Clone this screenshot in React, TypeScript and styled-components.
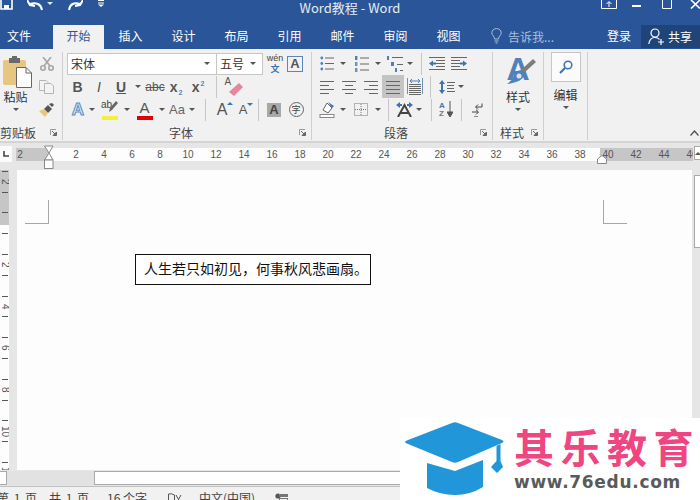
import React from 'react';
import styled, { createGlobalStyle } from 'styled-components';

const BLUE = '#2a5699';
const ICON = '#666666';
const ACCENT = '#4f7fb8';
const CJK = '"Noto Sans CJK SC", "Liberation Sans", sans-serif';

const GlobalStyle = createGlobalStyle`
  html, body { margin: 0; padding: 0; background: #fff; }
  body { font-family: ${CJK}; }
`;

// --- small drawings ---
const Lines = ({ rows, w = 14 }: { rows: [number, number][]; w?: number }) => (
  <svg width={w} height={14} viewBox={`0 0 ${w} 14`}>
    {rows.map(([x1, x2], i) => (
      <rect key={i} x={x1} y={1 + (i * 12) / Math.max(rows.length - 1, 1)} width={x2 - x1} height={1} fill={ICON} />
    ))}
  </svg>
);

const BulletList = () => (
  <svg width={14} height={15} viewBox="0 0 14 15">
    {[2, 7.5, 13].map(y => (
      <g key={y}>
        <circle cx={1.8} cy={y} r={1.4} fill={ACCENT} />
        <rect x={5} y={y - 0.5} width={9} height={1} fill={ICON} />
      </g>
    ))}
  </svg>
);

const NumberList = () => (
  <svg width={15} height={16} viewBox="0 0 15 16">
    {[2, 8, 14].map((y, i) => (
      <g key={y}>
        <rect x={1} y={y - 2} width={2.4} height={4} fill={i === 0 ? ACCENT : '#6e8fb8'} />
        <rect x={6} y={y - 0.5} width={9} height={1} fill={ICON} />
      </g>
    ))}
  </svg>
);

const MultiList = () => (
  <svg width={16} height={16} viewBox="0 0 16 16">
    <rect x={0} y={0} width={2} height={4} fill={ACCENT} />
    <rect x={5} y={1} width={11} height={1} fill={ICON} />
    <rect x={4} y={6} width={3} height={4} fill={ACCENT} />
    <rect x={10} y={8} width={6} height={1} fill={ICON} />
    <rect x={8} y={12} width={2} height={4} fill={ACCENT} />
    <rect x={13} y={14} width={3} height={1} fill={ICON} />
  </svg>
);

const IndentIcon = ({ flip }: { flip?: boolean }) => (
  <svg width={16} height={13} viewBox="0 0 16 13" style={flip ? { transform: 'scaleX(-1)' } : undefined}>
    {[0, 3, 6, 9, 12].map(y => (
      <rect key={y} x={y === 0 || y === 12 ? 0 : 7} y={y} width={y === 0 || y === 12 ? 16 : 9} height={1} fill={ICON} />
    ))}
    <path d="M0 6.5 L4 3.5 V5.5 H7 V7.5 H4 V9.5 Z" fill="#3f74b2" />
  </svg>
);

const Distributed = () => (
  <svg width={16} height={18} viewBox="0 0 16 18">
    <path d="M3 3 H13 M3 3 L5 1 M3 3 L5 5 M13 3 L11 1 M13 3 L11 5" stroke={ACCENT} strokeWidth={1} fill="none" />
    <path d="M0.5 0 V16 M15.5 0 V16" stroke="#6e8fb8" strokeWidth={1} />
    {[6, 8, 10, 12, 14, 16].map(y => (
      <rect key={y} x={2} y={y} width={12} height={1} fill={ICON} />
    ))}
  </svg>
);

const LineSpacing = () => (
  <svg width={16} height={16} viewBox="0 0 16 16">
    <path d="M3 1 L6 5 H4 V11 H6 L3 15 L0 11 H2 V5 H0 Z" fill="#3f74b2" />
    {[3, 6, 9, 12].map(y => (
      <rect key={y} x={8} y={y} width={y === 6 || y === 9 ? 7 : 8} height={1} fill={ICON} />
    ))}
  </svg>
);

const ShadingIcon = () => (
  <svg width={17} height={17} viewBox="0 0 17 17">
    <path d="M4 9 L8 2 L13 7 L9 12 Z" fill="#fff" stroke={ICON} strokeWidth={1} />
    <path d="M9 1 L13 7 L15 5 Z" fill="#3f74b2" />
    <rect x={1} y={13.5} width={14} height={3} fill="#fff" stroke="#888" strokeWidth={1} />
  </svg>
);

const BorderIcon = () => (
  <svg width={14} height={13} viewBox="0 0 14 13">
    <rect x={0.5} y={0.5} width={13} height={12} fill="none" stroke="#777" strokeDasharray="1 1" />
    <path d="M7 1 V12 M1 6.5 H13" stroke="#777" strokeDasharray="1 1" />
  </svg>
);

const DirectionIcon = () => (
  <svg width={17} height={15} viewBox="0 0 17 15">
    <path d="M0 3 L4 0 V2 H6 V4 H4 V6 Z M17 3 L13 0 V2 H11 V4 H13 V6 Z" fill="#3f74b2" />
    <path d="M2 15 L8.5 3 L15 15 M5 11 H12" stroke="#444" strokeWidth={2} fill="none" />
  </svg>
);

const ReturnMark = () => (
  <svg width={11} height={14} viewBox="0 0 11 14">
    <path d="M10 0.5 V4 H4 M6 1.5 L3.5 4 L6 6.5" stroke="#444" fill="none" />
    <path d="M0 9 H6 M4 6.8 L6.5 9 L4 11.5" stroke="#444" fill="none" />
    <path d="M2 13.5 H6" stroke="#888" />
  </svg>
);

const SortArrow = () => (
  <svg width={6} height={17} viewBox="0 0 6 17">
    <path d="M3 0 V14 M0 11 L3 16 L6 11 Z" stroke="#555" fill="#555" />
  </svg>
);

const PasteIcon = () => (
  <svg width={29} height={32} viewBox="0 0 29 32">
    <rect x={0} y={4} width={23} height={25} rx={2} fill="#e7c681" />
    <rect x={6} y={2} width={11} height={5} fill="#6a6a6a" />
    <rect x={9} y={0} width={5} height={3} fill="#6a6a6a" />
    <path d="M13.5 11.5 H23 L28.5 17 V31.5 H13.5 Z" fill="#fff" stroke="#666" />
    <path d="M23 11.5 V17 H28.5" fill="none" stroke="#666" />
  </svg>
);

const Scissors = () => (
  <svg width={14} height={14} viewBox="0 0 14 14" fill="none" stroke="#a5a5a5" strokeWidth={1.6}>
    <path d="M3 0 L10 9 M11 0 L4 9" />
    <circle cx={3} cy={11} r={2.2} />
    <circle cx={11} cy={11} r={2.2} />
  </svg>
);

const CopyIcon = () => (
  <svg width={15} height={14} viewBox="0 0 15 14" fill="#f3f3f3" stroke="#b5b5b5">
    <path d="M0.5 0.5 H7 L9 2.5 V10.5 H0.5 Z" />
    <path d="M5.5 3.5 H12 L14.5 6 V13.5 H5.5 Z" />
  </svg>
);

const PainterIcon = () => (
  <svg width={16} height={14} viewBox="0 0 16 14">
    <path d="M10 1 L13 4 L15 2 L13 0 Z" fill="#555" />
    <path d="M9 2 L13 6 L9 10 L5 6 Z" fill="#555" />
    <path d="M5 6 L9 10 L6 14 L0 8 Z" fill="#e7c681" />
  </svg>
);

const Launcher = () => (
  <svg width={7} height={7} viewBox="0 0 7 7">
    <path d="M0.5 6 V0.5 H6" fill="none" stroke="#999" />
    <path d="M2 2 L5.5 5.5 M6.5 3 V6.5 H3 Z" stroke="#666" fill="#666" />
  </svg>
);

const Highlighter = () => (
  <svg width={11} height={12} viewBox="0 0 11 12">
    <path d="M9 0 L11 2 L5 9 L2 11 L3 7 Z" fill="#666" />
  </svg>
);

const Eraser = () => (
  <svg width={14} height={13} viewBox="0 0 14 13" style={{ position: 'absolute', left: 7, top: 5 }}>
    <path d="M10 0 L14 4 L5 13 L0 9 Z" fill="#e8849d" />
  </svg>
);

const StyleBrush = () => (
  <svg width={30} height={30} viewBox="0 0 30 30" style={{ position: 'absolute', left: 0, top: 3 }}>
    <path d="M26 4 L29 7 L17 18 L14 15 Z" fill="#7d7d7d" />
    <path d="M14 15 L18 19 Q16 25 9 27 Q3 29 0 29 Q5 26 6 22 Q8 16 14 15 Z" fill="#4f81bd" />
    <circle cx={12} cy={21} r={2.5} fill="#d8e4f2" />
  </svg>
);

const SearchIcon = () => (
  <svg width={14} height={14} viewBox="0 0 14 14" fill="none" stroke="#3f74b2" strokeWidth={1.6}>
    <circle cx={9} cy={5} r={3.8} />
    <path d="M6 8 L1 13" strokeWidth={2.2} />
  </svg>
);

const LampIcon = () => (
  <svg width={11} height={16} viewBox="0 0 11 16" fill="none" stroke="#a9bfdd">
    <path d="M3.5 11 C3.5 8 0.8 7.5 0.8 4.8 C0.8 2.3 3 0.6 5.5 0.6 C8 0.6 10.2 2.3 10.2 4.8 C10.2 7.5 7.5 8 7.5 11 Z" />
    <path d="M3.5 13 H7.5 M4.5 15 H6.5" />
  </svg>
);

const PersonIcon = () => (
  <svg width={17} height={17} viewBox="0 0 17 17" fill="none" stroke="#fff" strokeWidth={1.2}>
    <circle cx={7} cy={5} r={4} />
    <path d="M0.8 16 C1.5 11.5 4 9.5 7 9.5 C9 9.5 10.5 10.2 11.5 11.5" />
    <path d="M13 11 V17 M10 14 H16" />
  </svg>
);

const SpellIcon = () => (
  <svg width={14} height={12} viewBox="0 0 14 12" fill="none" stroke="#555">
    <path d="M0.5 1 Q3 0 6.5 2 V12 Q3 10 0.5 11 Z" />
    <path d="M8 2 L13 11 M13 2 L8 11" />
  </svg>
);

const MacroIcon = () => (
  <svg width={13} height={11} viewBox="0 0 13 11">
    <circle cx={3} cy={3} r={2.6} fill="#555" />
    <rect x={4} y={1} width={9} height={3} fill="#777" />
    <rect x={4.5} y={5.5} width={8} height={5.5} fill="none" stroke="#777" />
  </svg>
);

const HourglassMarker = () => (
  <MarkerSvg $left={28} width={10} height={25} viewBox="0 0 10 25">
    <path d="M0.5 1 H9 L5 8 Z M5 8 L9 15 H0.5 Z" fill="#fff" stroke="#8a8a8a" />
    <rect x={0.5} y={15} width={8.5} height={8.5} fill="#fff" stroke="#8a8a8a" />
  </MarkerSvg>
);

const RightMarker = () => (
  <MarkerSvg $left={581} $top={7} width={10} height={9} viewBox="0 0 10 9">
    <path d="M0.5 4 L5 0.5 L9.5 4 V8.5 H0.5 Z" fill="#fff" stroke="#8a8a8a" />
  </MarkerSvg>
);

// --- data ---
const TABS = ['插入', '设计', '布局', '引用', '邮件', '审阅', '视图'];
const H_CENTER = [2, 4, 6, 8, 10, 12, 14, 16, 18, 20, 22, 24, 26, 28, 30, 32, 34, 36, 38];
const H_RIGHT = [40, 42, 44, 46];
const V_CELLS = ['2', '', '2', '4', '6', '8', '10', '12'];

const App: React.FC = () => (
  <>
    <GlobalStyle />
    <Page>
      <TitleBar>
        <QuickAccess>
          <svg width={13} height={10} viewBox="0 0 13 10">
            <path d="M1 0 V9 H12 V0" fill="none" stroke="#fff" strokeWidth={1.6} />
            <rect x={4} y={5} width={5} height={4} fill="#fff" />
          </svg>
          <svg width={16} height={11} viewBox="0 0 16 11" style={{ marginLeft: 14 }}>
            <path d="M15 10 C14 4 9 2 3 4 M0 0 L3 5 L8 6" fill="none" stroke="#fff" strokeWidth={2} />
          </svg>
          <Caret $color="#dfe7f2" style={{ marginLeft: 4, marginTop: 2 }} />
          <svg width={15} height={11} viewBox="0 0 15 11" style={{ marginLeft: 15 }}>
            <path d="M1 10 C2 4 6 2 12 4 M15 0 L12 5 L7 6" fill="none" stroke="#fff" strokeWidth={2} />
          </svg>
          <svg width={6} height={7} viewBox="0 0 6 7" style={{ marginLeft: 15 }}>
            <path d="M0 0.5 H6 M0 3 H6" stroke="#fff" />
            <path d="M0 4.5 H6 L3 7 Z" fill="#fff" />
          </svg>
        </QuickAccess>
        <Title>Word教程 - Word</Title>
        <WindowButtons>
          <svg width={16} height={9} viewBox="0 0 16 9" fill="none" stroke="#fff">
            <path d="M0.5 0 V8.5 H15.5 V0" />
            <path d="M8 7 V2 M5.5 4 L8 1.5 L10.5 4" />
          </svg>
          <MinBar />
          <svg width={10} height={9} viewBox="0 0 10 9" fill="none" stroke="#fff" style={{ marginLeft: 21 }}>
            <path d="M0.5 0 V8.5 H9.5 V0" />
          </svg>
          <svg width={10} height={9} viewBox="0 0 10 9" stroke="#fff" strokeWidth={1.6} style={{ marginLeft: 18 }}>
            <path d="M1 0 L10 8.5 M10 0 L1 8.5" />
          </svg>
        </WindowButtons>
      </TitleBar>

      <TabBar>
        <FileTab>文件</FileTab>
        <Tab $active>开始</Tab>
        {TABS.map(t => (
          <Tab key={t}>{t}</Tab>
        ))}
        <TellMe>
          <LampIcon />
          <span>告诉我...</span>
        </TellMe>
        <SignIn>登录</SignIn>
        <ShareButton>
          <PersonIcon />
          <span>共享</span>
        </ShareButton>
      </TabBar>

      <Ribbon>
        <Group $w={63}>
          <Rows>
            <ClipboardBody>
              <LargeButton $w={31}>
                <PasteSlot><PasteIcon /></PasteSlot>
                <LargeText>粘贴</LargeText>
                <Caret />
              </LargeButton>
              <SmallColumn>
                <Scissors />
                <CopyIcon />
                <PainterIcon />
              </SmallColumn>
            </ClipboardBody>
          </Rows>
          <LabelRow>
            <GroupLabel $left>剪贴板</GroupLabel>
            <Launcher />
          </LabelRow>
        </Group>

        <Group $w={249}>
          <Rows $pad={4}>
            <Row>
              <FontSelect $w={150}>宋体<Caret /></FontSelect>
              <FontSelect $w={47} $joined>五号<Caret /></FontSelect>
              <Cell $w={22} $ml={1}>
                <WenStack><small>wén</small><b>文</b></WenStack>
              </Cell>
              <BoxedA>A</BoxedA>
            </Row>
            <Row>
              <Cell $w={21}><Letter $bold>B</Letter></Cell>
              <Cell $w={22}><Letter $italic>I</Letter></Cell>
              <Cell $w={22}><Letter $bold $under>U</Letter></Cell>
              <Cell $w={12}><Caret /></Cell>
              <Cell $w={22}><Strike>abc</Strike></Cell>
              <Cell $w={20}><Letter $bold>x<sub>2</sub></Letter></Cell>
              <Cell $w={24}><Letter $bold>x<sup>2</sup></Letter></Cell>
              <Divider $ml={6} />
              <Cell $w={31}>
                <EraserBox>
                  <EraserA>A</EraserA>
                  <Eraser />
                </EraserBox>
              </Cell>
            </Row>
            <Row>
              <Cell $w={22}><EffectA>A</EffectA></Cell>
              <Cell $w={6}><Caret /></Cell>
              <Cell $w={29}>
                <ColorBar $color="#f5f03c">
                  <HighlightText>ab</HighlightText>
                  <HighlightBrush><Highlighter /></HighlightBrush>
                </ColorBar>
              </Cell>
              <Cell $w={6}><Caret /></Cell>
              <Cell $w={29}>
                <ColorBar $color="#e00000"><ColorLetter>A</ColorLetter></ColorBar>
              </Cell>
              <Cell $w={6}><Caret /></Cell>
              <Cell $w={24}><CaseLetter>Aa</CaseLetter></Cell>
              <Cell $w={6}><Caret /></Cell>
              <Divider $ml={10} />
              <Cell $w={20} $ml={6}><SizeLetter>A<Tick $up /></SizeLetter></Cell>
              <Cell $w={20} $ml={1}><SizeLetter $small>A<Tick /></SizeLetter></Cell>
              <Divider $ml={5} />
              <Cell $w={20} $ml={5}><ShadedA>A</ShadedA></Cell>
              <Cell $w={20} $ml={2}><CircleChar>字</CircleChar></Cell>
            </Row>
          </Rows>
          <LabelRow>
            <GroupLabel>字体</GroupLabel>
            <Launcher />
          </LabelRow>
        </Group>

        <Group $w={181}>
          <Rows $pad={4}>
            <Row>
              <Cell $w={22}><BulletList /></Cell>
              <Cell $w={10}><Caret /></Cell>
              <Cell $w={24} $ml={1}><NumberList /></Cell>
              <Cell $w={10}><Caret /></Cell>
              <Cell $w={24}><MultiList /></Cell>
              <Cell $w={6}><Caret /></Cell>
              <Divider $ml={8} />
              <Cell $w={22} $ml={4}><IndentIcon /></Cell>
              <Cell $w={22}><IndentIcon flip /></Cell>
            </Row>
            <Row>
              <Cell $w={22}><Lines rows={[[0, 14], [0, 9], [0, 14], [0, 9]]} /></Cell>
              <Cell $w={22}><Lines rows={[[0, 14], [3, 11], [0, 14], [3, 11]]} /></Cell>
              <Cell $w={22}><Lines rows={[[0, 14], [5, 14], [0, 14], [5, 14]]} /></Cell>
              <Cell $w={22} $selected><Lines rows={[[0, 14], [0, 14], [0, 14], [0, 14]]} /></Cell>
              <Cell $w={22}><Distributed /></Cell>
              <Divider $ml={4} />
              <Cell $w={22} $ml={5}><LineSpacing /></Cell>
              <Cell $w={6}><Caret /></Cell>
            </Row>
            <Row>
              <Cell $w={22}><ShadingIcon /></Cell>
              <Cell $w={10}><Caret /></Cell>
              <Cell $w={24} $ml={1}><BorderIcon /></Cell>
              <Cell $w={10}><Caret /></Cell>
              <Divider $ml={5} />
              <Cell $w={24} $ml={3}><DirectionIcon /></Cell>
              <Cell $w={6}><Caret /></Cell>
              <Divider $ml={9} />
              <Cell $w={24} $ml={2}>
                <SortLetters><span>A</span><span>Z</span></SortLetters>
                <SortArrow />
              </Cell>
              <Divider $ml={3} />
              <Cell $w={30}><ReturnMark /></Cell>
            </Row>
          </Rows>
          <LabelRow>
            <GroupLabel>段落</GroupLabel>
            <Launcher />
          </LabelRow>
        </Group>

        <Group $w={51}>
          <Rows>
            <LargeButton>
              <StyleSlot>
                <StyleA>A</StyleA>
                <StyleBrush />
              </StyleSlot>
              <LargeText>样式</LargeText>
              <Caret />
            </LargeButton>
          </Rows>
          <LabelRow>
            <GroupLabel>样式</GroupLabel>
            <Launcher />
          </LabelRow>
        </Group>

        <Group $w={44}>
          <Rows>
            <LargeButton>
              <EditBox><SearchIcon /></EditBox>
              <EditText>编辑</EditText>
              <Caret />
            </LargeButton>
          </Rows>
        </Group>

        <Collapse>
          <svg width={9} height={6} viewBox="0 0 9 6" fill="none" stroke="#555" strokeWidth={1.4}>
            <path d="M0.5 5.5 L4.5 1 L8.5 5.5" />
          </svg>
        </Collapse>
      </Ribbon>

      <RulerRow>
        <TabStop>
          <svg width={6} height={6} viewBox="0 0 6 6">
            <path d="M1 0 V5 H6" fill="none" stroke="#444" strokeWidth={1.6} />
          </svg>
        </TabStop>
        <HRuler>
          <RulerMargin $w={32}>
            <RulerNum $w={8}>2</RulerNum>
          </RulerMargin>
          <RulerBody>
            {H_CENTER.map(n => (
              <RulerNum key={n} $w={28}>{n}</RulerNum>
            ))}
          </RulerBody>
          <RulerMargin $w={93} $gap={12}>
            {H_RIGHT.map(n => (
              <RulerNum key={n} $w={16}>{n}</RulerNum>
            ))}
          </RulerMargin>
          <HourglassMarker />
          <RightMarker />
        </HRuler>
        <ScrollUp>
          <Caret $up />
        </ScrollUp>
      </RulerRow>

      <Main>
        <VRuler>
          {V_CELLS.map((n, i) => (
            <VCell key={i}>
              <VTick />
              <VNum>{n}</VNum>
              <VTick />
            </VCell>
          ))}
        </VRuler>
        <Doc>
          <CropRow>
            <CropMark />
            <CropMark $right />
          </CropRow>
          <TextBox>人生若只如初见，何事秋风悲画扇。</TextBox>
        </Doc>
        <VScroll>
          <VThumb />
        </VScroll>
      </Main>

      <HScroll>
        <HScrollButton />
        <HTrack />
        <HThumb />
      </HScroll>

      <StatusBar>
        <PageCount>第 1 页，共 1 页</PageCount>
        <StatusText $w={61}>16 个字</StatusText>
        <SpellSlot><SpellIcon /></SpellSlot>
        <StatusText $w={76}>中文(中国)</StatusText>
        <SpellSlot><MacroIcon /></SpellSlot>
      </StatusBar>

      <Watermark>
        <svg width={110} height={82} viewBox="0 0 110 82">
          <path d="M5 24 Q5 23 8 22 L52 5 Q55 3.5 58 5 L102 22 Q105 23.500 102 25 L58 44 Q55 45.500 52 44 L8 26 Q5 25 5 24 Z" fill="#2196d9" />
          <path d="M27 45 L55 53 L83 42 V69 Q70 77 55 77 Q40 77 27 70 Z" fill="#2196d9" />
          <path d="M96.500 28 L100.500 26 V43 L103 49 L97 55 L91 49 L96.500 43 Z" fill="#2196d9" />
        </svg>
        <BrandColumn>
          <BrandName>其乐教育</BrandName>
          <BrandUrl>www.76edu.com</BrandUrl>
        </BrandColumn>
      </Watermark>
    </Page>
  </>
);

// --- STYLED COMPONENTS ---
const Page = styled.div`
  position: relative;
  width: 700px;
  height: 500px;
  overflow: hidden;
  display: flex;
  flex-direction: column;
  background: #e6e6e6;
  color: #444;
  font-size: 12px;
`;

const TitleBar = styled.div`
  height: 25px;
  flex: none;
  display: grid;
  grid-template-columns: 1fr auto 1fr;
  background: ${BLUE};
  color: #fff;
`;

const QuickAccess = styled.div`
  display: flex;
  align-items: flex-start;
  svg { flex: none; }
`;

const Title = styled.div`
  font-size: 13px;
  line-height: 15px;
  color: #e4ebf5;
`;

const WindowButtons = styled.div`
  display: flex;
  align-items: flex-start;
  justify-content: flex-end;
`;

const MinBar = styled.div`
  width: 9px;
  height: 2px;
  margin: 5px 0 0 15px;
  background: #fff;
`;

const TabBar = styled.div`
  height: 24px;
  flex: none;
  display: flex;
  background: ${BLUE};
  color: #fff;
`;

const Tab = styled.div<{ $active?: boolean }>`
  width: ${({ $active }) => ($active ? 51 : 53)}px;
  line-height: 22px;
  text-align: center;
  background: ${({ $active }) => ($active ? '#f1f1f1' : 'transparent')};
  color: ${({ $active }) => ($active ? BLUE : '#fff')};
`;

const FileTab = styled(Tab)`
  width: 38px;
  margin-right: 15px;
`;

const TellMe = styled.div`
  display: flex;
  align-items: center;
  gap: 6px;
  height: 22px;
  margin-left: 16px;
  color: #a9bfdd;
`;

const SignIn = styled.div`
  margin-left: auto;
  line-height: 22px;
  margin-right: 10px;
`;

const ShareButton = styled.div`
  width: 59px;
  height: 23px;
  padding-left: 7px;
  box-sizing: border-box;
  display: flex;
  align-items: center;
  gap: 3px;
  background: #1f4478;
`;

const Ribbon = styled.div`
  height: 94px;
  flex: none;
  display: flex;
  position: relative;
  box-sizing: border-box;
  border-bottom: 2px solid #d4d4d4;
  background: #f1f1f1;
`;

const Group = styled.div<{ $w: number }>`
  width: ${({ $w }) => $w}px;
  height: 88px;
  margin-top: 3px;
  box-sizing: border-box;
  display: flex;
  flex-direction: column;
  border-right: 1px solid #cfcfcf;
`;

const Rows = styled.div<{ $pad?: number }>`
  height: 72px;
  flex: none;
  padding-left: ${({ $pad }) => $pad ?? 0}px;
`;

const Row = styled.div`
  display: flex;
  align-items: center;
  height: 23px;
`;

const Cell = styled.div<{ $w: number; $ml?: number; $selected?: boolean }>`
  width: ${({ $w }) => $w}px;
  height: 23px;
  flex: none;
  margin-left: ${({ $ml }) => $ml ?? 0}px;
  display: flex;
  align-items: center;
  justify-content: center;
  background: ${({ $selected }) => ($selected ? '#c4c4c4' : 'transparent')};
`;

const Divider = styled.div<{ $ml: number }>`
  width: 1px;
  height: 22px;
  flex: none;
  margin-left: ${({ $ml }) => $ml}px;
  background: #c6c6c6;
`;

const Caret = styled.span<{ $color?: string; $up?: boolean }>`
  display: inline-block;
  flex: none;
  width: 0;
  height: 0;
  border-left: 3px solid transparent;
  border-right: 3px solid transparent;
  ${({ $up, $color }) =>
    $up
      ? `border-bottom: 3px solid ${$color ?? '#555'};`
      : `border-top: 3px solid ${$color ?? '#555'};`}
`;

const ClipboardBody = styled.div`
  display: flex;
`;

const LargeButton = styled.div<{ $w?: number }>`
  width: ${({ $w }) => ($w ? `${$w}px` : '100%')};
  display: flex;
  flex-direction: column;
  align-items: center;
`;

const PasteSlot = styled.div`
  height: 36px;
  padding-top: 4px;
  box-sizing: border-box;
  margin-left: 4px;
`;

const LargeText = styled.div`
  line-height: 17px;
  height: 20px;
  color: #333;
`;

const SmallColumn = styled.div`
  width: 31px;
  height: 68px;
  padding: 5px 0 3px 0;
  box-sizing: border-box;
  display: flex;
  flex-direction: column;
  align-items: center;
  justify-content: space-between;
`;

const LabelRow = styled.div`
  height: 15px;
  display: flex;
  align-items: center;
  padding-right: 5px;
  margin-top: 1px;
`;

const GroupLabel = styled.div<{ $left?: boolean }>`
  flex: 1;
  min-width: 0;
  white-space: nowrap;
  line-height: 15px;
  text-align: ${({ $left }) => ($left ? 'left' : 'center')};
`;

const FontSelect = styled.div<{ $w: number; $joined?: boolean }>`
  width: ${({ $w }) => $w}px;
  height: 22px;
  flex: none;
  box-sizing: border-box;
  display: flex;
  align-items: center;
  justify-content: space-between;
  padding: 0 6px 0 3px;
  margin-left: ${({ $joined }) => ($joined ? -1 : 0)}px;
  background: #fff;
  border: 1px solid #c6c6c6;
  color: #333;
`;

const WenStack = styled.div`
  display: flex;
  flex-direction: column;
  align-items: center;
  font-family: "Liberation Sans", sans-serif;
  small { font-size: 9px; line-height: 10px; color: #444; }
  b { font-family: ${CJK}; font-size: 9px; line-height: 11px; color: #3f74b2; font-weight: 700; }
`;

const BoxedA = styled.div`
  width: 16px;
  height: 16px;
  margin-left: 1px;
  box-sizing: border-box;
  border: 1px solid #5a86ba;
  font: 700 13px/14px "Liberation Sans", sans-serif;
  text-align: center;
  color: #555;
`;

const Letter = styled.span<{ $bold?: boolean; $italic?: boolean; $under?: boolean }>`
  font-family: "Liberation Sans", sans-serif;
  font-size: 14px;
  font-weight: ${({ $bold }) => ($bold ? 700 : 400)};
  font-style: ${({ $italic }) => ($italic ? 'italic' : 'normal')};
  text-decoration: ${({ $under }) => ($under ? 'underline' : 'none')};
  color: #555;
  sub, sup { font-size: 7px; color: #5a86ba; line-height: 0; margin-left: 1px; }
`;

const Strike = styled.span`
  font: 400 12px "Liberation Sans", sans-serif;
  text-decoration: line-through;
  color: #555;
`;

const EraserBox = styled.div`
  position: relative;
  width: 22px;
  height: 18px;
`;

const EraserA = styled.span`
  position: absolute;
  left: 3px;
  top: -2px;
  font: 400 10px "Liberation Sans", sans-serif;
  color: #555;
`;

const EffectA = styled.span`
  font: 700 17px "Liberation Sans", sans-serif;
  color: #dbe8f6;
  -webkit-text-stroke: 1px #5a8ec6;
`;

const ColorBar = styled.div<{ $color: string }>`
  position: relative;
  width: 16px;
  height: 17px;
  display: flex;
  justify-content: center;
  border-bottom: 4px solid ${({ $color }) => $color};
`;

const HighlightText = styled.span`
  font: 400 10px/11px "Liberation Sans", sans-serif;
  align-self: flex-start;
  margin-right: 6px;
  color: #444;
`;

const HighlightBrush = styled.span`
  position: absolute;
  right: 0;
  top: 0;
`;

const ColorLetter = styled.span`
  font: 400 15px/17px "Liberation Sans", sans-serif;
  color: #555;
`;

const CaseLetter = styled.span`
  font: 400 13px "Liberation Sans", sans-serif;
  color: #666;
`;

const SizeLetter = styled.span<{ $small?: boolean }>`
  position: relative;
  font: 400 ${({ $small }) => ($small ? 13 : 16)}px "Liberation Sans", sans-serif;
  color: #555;
`;

const Tick = styled.i<{ $up?: boolean }>`
  position: absolute;
  left: 100%;
  top: 1px;
  width: 0;
  height: 0;
  border-left: 3px solid transparent;
  border-right: 3px solid transparent;
  ${({ $up }) => ($up ? 'border-bottom: 3px solid #3f74b2;' : 'border-top: 3px solid #3f74b2;')}
`;

const ShadedA = styled.span`
  width: 14px;
  height: 14px;
  background: #a8a8a8;
  font: 700 13px/14px "Liberation Sans", sans-serif;
  text-align: center;
  color: #444;
`;

const CircleChar = styled.span`
  width: 15px;
  height: 15px;
  box-sizing: border-box;
  border: 1px solid #666;
  border-radius: 50%;
  font-size: 9px;
  line-height: 13px;
  text-align: center;
`;

const SortLetters = styled.div`
  display: flex;
  flex-direction: column;
  font: 700 8px/8px "Liberation Sans", sans-serif;
  margin-right: 2px;
  span:first-child { color: #3f74b2; }
  span:last-child { color: #777; }
`;

const StyleSlot = styled.div`
  position: relative;
  width: 27px;
  height: 36px;
  margin-left: 4px;
  padding-top: 2px;
  box-sizing: border-box;
`;

const StyleA = styled.div`
  font: 700 32px/30px "Liberation Sans", sans-serif;
  color: #4f81bd;
`;

const EditBox = styled.div`
  width: 30px;
  height: 30px;
  box-sizing: border-box;
  display: flex;
  align-items: center;
  justify-content: center;
  background: #fbfbfb;
  border: 1px solid #c6c6c6;
`;

const EditText = styled(LargeText)`
  margin-top: 4px;
`;

const Collapse = styled.div`
  position: absolute;
  right: 1px;
  bottom: 5px;
  line-height: 0;
`;

const RulerRow = styled.div`
  height: 27px;
  flex: none;
  display: flex;
  padding-top: 3px;
  box-sizing: border-box;
`;

const TabStop = styled.div`
  width: 12px;
  height: 16px;
  flex: none;
  margin-right: 4px;
  box-sizing: border-box;
  display: flex;
  align-items: center;
  justify-content: center;
  background: #fbfbfb;
`;

const HRuler = styled.div`
  position: relative;
  width: 677px;
  height: 13px;
  margin-top: 2px;
  flex: none;
  display: flex;
  overflow: visible;
`;

const RulerMargin = styled.div<{ $w: number; $gap?: number }>`
  width: ${({ $w }) => $w}px;
  flex: none;
  display: flex;
  gap: ${({ $gap }) => $gap ?? 0}px;
  background: #c6c6c6;
  overflow: hidden;
`;

const RulerBody = styled.div`
  width: 552px;
  flex: none;
  box-sizing: border-box;
  padding-left: 14px;
  display: flex;
  background: #fdfdfd;
`;

const RulerNum = styled.span<{ $w: number }>`
  width: ${({ $w }) => $w}px;
  flex: none;
  text-align: center;
  font: 400 10px/13px "Liberation Sans", sans-serif;
  color: #555;
`;

const MarkerSvg = styled.svg<{ $left: number; $top?: number }>`
  position: absolute;
  left: ${({ $left }) => $left}px;
  top: ${({ $top }) => $top ?? -3}px;
`;

const ScrollUp = styled.div`
  width: 7px;
  height: 14px;
  margin-left: 1px;
  flex: none;
  display: flex;
  align-items: center;
  justify-content: center;
  box-sizing: border-box;
  background: #fff;
  border: 1px solid #aaa;
`;

const Main = styled.div`
  height: 300px;
  flex: none;
  display: flex;
`;

const VRuler = styled.div`
  width: 9px;
  flex: none;
  margin-right: 8px;
  overflow: hidden;
  background: linear-gradient(#c6c6c6 55px, #fdfdfd 55px);
`;

const VCell = styled.div`
  height: 41.6px;
  position: relative;
  top: -9px;
  display: flex;
  flex-direction: column;
  align-items: center;
  justify-content: center;
`;

const VTick = styled.div`
  width: 6px;
  height: 1px;
  flex: none;
  background: #555;
`;

const VNum = styled.div`
  height: 19.8px;
  flex: none;
  display: flex;
  align-items: center;
  justify-content: center;
  writing-mode: vertical-rl;
  font: 400 10px/10px "Liberation Sans", sans-serif;
  color: #555;
`;

const Doc = styled.div`
  width: 675px;
  flex: none;
  box-sizing: border-box;
  padding: 30px 65px 0 8px;
  background: #fdfdfd;
  display: flex;
  flex-direction: column;
`;

const CropRow = styled.div`
  display: flex;
  justify-content: space-between;
`;

const CropMark = styled.div<{ $right?: boolean }>`
  width: 24px;
  height: 24px;
  box-sizing: border-box;
  border-bottom: 1px solid #a6a6a6;
  ${({ $right }) => ($right ? 'border-left: 1px solid #a6a6a6;' : 'border-right: 1px solid #a6a6a6;')}
`;

const TextBox = styled.div`
  align-self: flex-start;
  width: 236px;
  height: 31px;
  margin: 30px 0 0 110px;
  box-sizing: border-box;
  border: 1px solid #111;
  padding-left: 8px;
  font-size: 14px;
  line-height: 26px;
  white-space: nowrap;
  color: #111;
  background: #fff;
`;

const VScroll = styled.div`
  width: 6px;
  flex: none;
  margin-left: 2px;
  padding-top: 5px;
  box-sizing: border-box;
`;

const VThumb = styled.div`
  height: 73px;
  box-sizing: border-box;
  background: #fff;
  border: 1px solid #aaa;
  border-right: 0;
`;

const HScroll = styled.div`
  height: 17px;
  flex: none;
  box-sizing: border-box;
  padding: 1px 0 1px;
  display: flex;
  border-bottom: 1px solid #c0c0c0;
`;

const HScrollButton = styled.div`
  width: 7px;
  box-sizing: border-box;
  background: #fff;
  border: 1px solid #aaa;
  border-left: 0;
`;

const HTrack = styled.div`
  width: 87px;
  background: #e2e2e2;
`;

const HThumb = styled.div`
  flex: 1;
  box-sizing: border-box;
  background: #fff;
  border: 1px solid #aaa;
`;

const StatusBar = styled.div`
  flex: 1;
  display: flex;
  align-items: flex-start;
  padding-top: 3px;
  background: #f1f1f1;
  overflow: hidden;
`;

const StatusText = styled.span<{ $w: number }>`
  width: ${({ $w }) => $w}px;
  flex: none;
  line-height: 16px;
  white-space: nowrap;
`;

const PageCount = styled(StatusText).attrs({ $w: 110 })`
  margin-left: -3px;
  word-spacing: 2px;
`;

const SpellSlot = styled.span`
  width: 31px;
  flex: none;
  padding-top: 3px;
  line-height: 0;
`;

const Watermark = styled.div`
  position: absolute;
  right: 0;
  bottom: 0;
  width: 300px;
  height: 82px;
  display: flex;
  background: #fff;
`;

const BrandColumn = styled.div`
  display: flex;
  flex-direction: column;
  margin-left: 4px;
`;

const BrandName = styled.div`
  margin-top: 4px;
  font-size: 40px;
  line-height: 48px;
  font-weight: 700;
  letter-spacing: 6.500px;
  white-space: nowrap;
  color: #ef4580;
`;

const BrandUrl = styled.div`
  margin-top: 3px;
  font: 700 17px/18px "DejaVu Sans", sans-serif;
  letter-spacing: 0.7px;
  color: #5a5a5a;
  white-space: nowrap;
`;

export default App;
